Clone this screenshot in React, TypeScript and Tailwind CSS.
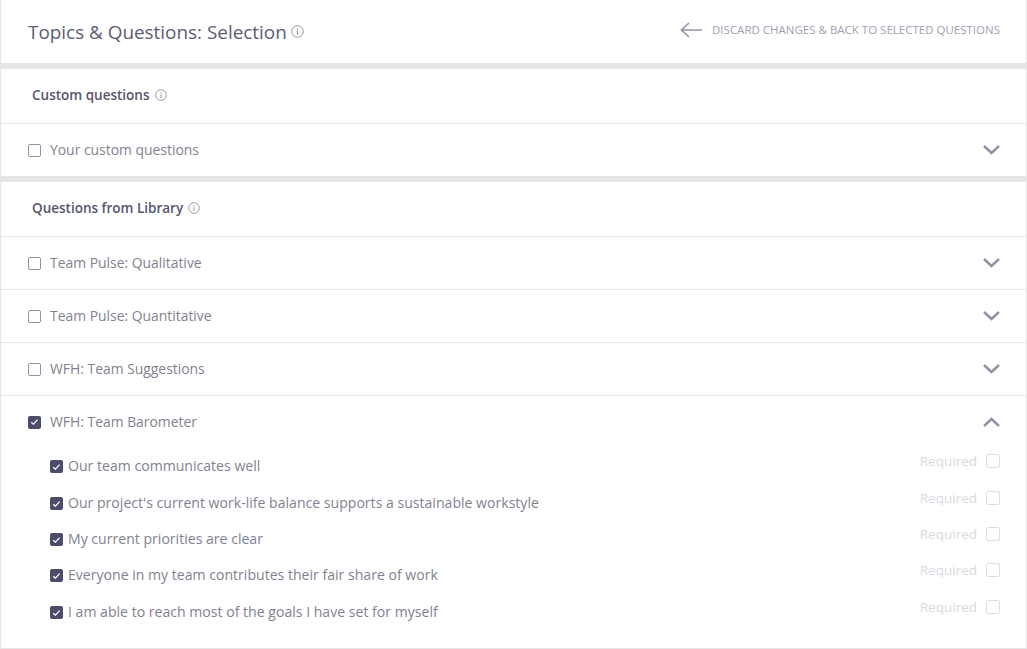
import React from "react";

const font = { fontFamily: '"Open Sans", sans-serif' };

function Info({ size = 13 }: { size?: number }) {
  return (
    <svg width={size} height={size} viewBox="0 0 14 14" fill="none" className="shrink-0">
      <circle cx="7" cy="7" r="6.2" stroke="#8f8f9f" strokeWidth="1" />
      <rect x="6.4" y="6" width="1.2" height="4.5" fill="#8f8f9f" />
      <rect x="6.4" y="3.6" width="1.2" height="1.3" fill="#8f8f9f" />
    </svg>
  );
}

function Box({ checked = false, faint = false }: { checked?: boolean; faint?: boolean }) {
  if (checked) {
    return (
      <span className="flex h-[13px] w-[13px] shrink-0 items-center justify-center rounded-[2px] bg-[#4a4c69]">
        <svg width="9" height="8" viewBox="0 0 9 8" fill="none">
          <path d="M1.2 4.2 L3.4 6.2 L7.6 1.6" stroke="#ffffff" strokeWidth="1.3" />
        </svg>
      </span>
    );
  }
  return (
    <span
      className={
        faint
          ? "block h-[14px] w-[14px] shrink-0 rounded-[2px] border border-[#dddde3] bg-white"
          : "block h-[13px] w-[13px] shrink-0 rounded-[2px] border border-[#9492a6] bg-white"
      }
    />
  );
}

function Chevron({ up = false }: { up?: boolean }) {
  return (
    <svg width="17" height="10" viewBox="0 0 17 10" fill="none">
      <path
        d={up ? "M1 9 L8.5 2 L16 9" : "M1 1 L8.5 8 L16 1"}
        stroke="#9493a6"
        strokeWidth="2.5"
      />
    </svg>
  );
}

function Row({ label, checked = false, up = false, border = true }: { label: string; checked?: boolean; up?: boolean; border?: boolean }) {
  return (
    <div className={border ? "flex h-[53px] items-center border-b border-[#e6e6e6] pl-[27px] pr-[26px]" : "flex h-[52px] items-center pl-[27px] pr-[26px]"}>
      <Box checked={checked} />
      <span className="ml-[9px] text-[13.9px] leading-5 text-[#82828f]">{label}</span>
      <span className="ml-auto flex"><Chevron up={up} /></span>
    </div>
  );
}

function Question({ label, h }: { label: string; h: string }) {
  return (
    <div className={"flex items-start pl-[49px] pr-[26px] " + h}>
      <span className="mt-[7px]"><Box checked /></span>
      <span className="ml-[5px] text-[14.09px] leading-[26px] text-[#82828f]">{label}</span>
      <span className="ml-auto flex items-center">
        <span className="text-[13.5px] leading-[16px] text-[#d9d9e0]">Required</span>
        <span className="ml-[9px]"><Box faint /></span>
      </span>
    </div>
  );
}

export default function App() {
  return (
    <div style={font} className="h-[649px] w-[1027px] overflow-hidden bg-white">
      <div className="flex h-[649px] flex-col border border-t-0 border-[#e6e6e6]">
        <div className="flex h-[63px] items-center rounded-t-md pl-[27px] pr-[26px]">
          <span className="text-[18.9px] leading-7 text-[#5b5d74]">Topics &amp; Questions: Selection</span>
          <span className="ml-[4px] flex"><Info /></span>
          <span className="ml-auto flex items-center pb-[4px]">
            <svg width="22" height="16" viewBox="0 0 22 16" fill="none">
              <path d="M22 8 H2 M9 1 L1.5 8 L9 15" stroke="#9493a6" strokeWidth="1.7" />
            </svg>
            <span className="ml-[10px] text-[11.5px] font-medium leading-4 text-[#a0a0b0]">
              DISCARD CHANGES &amp; BACK TO SELECTED QUESTIONS
            </span>
          </span>
        </div>
        <div className="h-[6px] bg-[#e5e5e5]" />
        <div className="flex h-[55px] items-center gap-[5px] border-b border-[#e6e6e6] pb-[2px] pl-[31px]">
          <span className="text-[13.5px] font-semibold leading-5 text-[#54566f]">Custom questions</span>
          <Info size={12} />
        </div>
        <Row label="Your custom questions" border={false} />
        <div className="h-[6px] bg-[#e5e5e5]" />
        <div className="flex h-[55px] items-center gap-[5px] border-b border-[#e6e6e6] pb-[2px] pl-[31px]">
          <span className="text-[13.5px] font-semibold leading-5 text-[#54566f]">Questions from Library</span>
          <Info size={12} />
        </div>
        <Row label="Team Pulse: Qualitative" />
        <Row label="Team Pulse: Quantitative" />
        <Row label="WFH: Team Suggestions" />
        <Row label="WFH: Team Barometer" checked up border={false} />
        <div className="pt-[5px]">
          <Question label="Our team communicates well" h="h-[37px]" />
          <Question label="Our project's current work-life balance supports a sustainable workstyle" h="h-[36px]" />
          <Question label="My current priorities are clear" h="h-[36px]" />
          <Question label="Everyone in my team contributes their fair share of work" h="h-[37px]" />
          <Question label="I am able to reach most of the goals I have set for myself" h="h-[36px]" />
        </div>
      </div>
    </div>
  );
}
